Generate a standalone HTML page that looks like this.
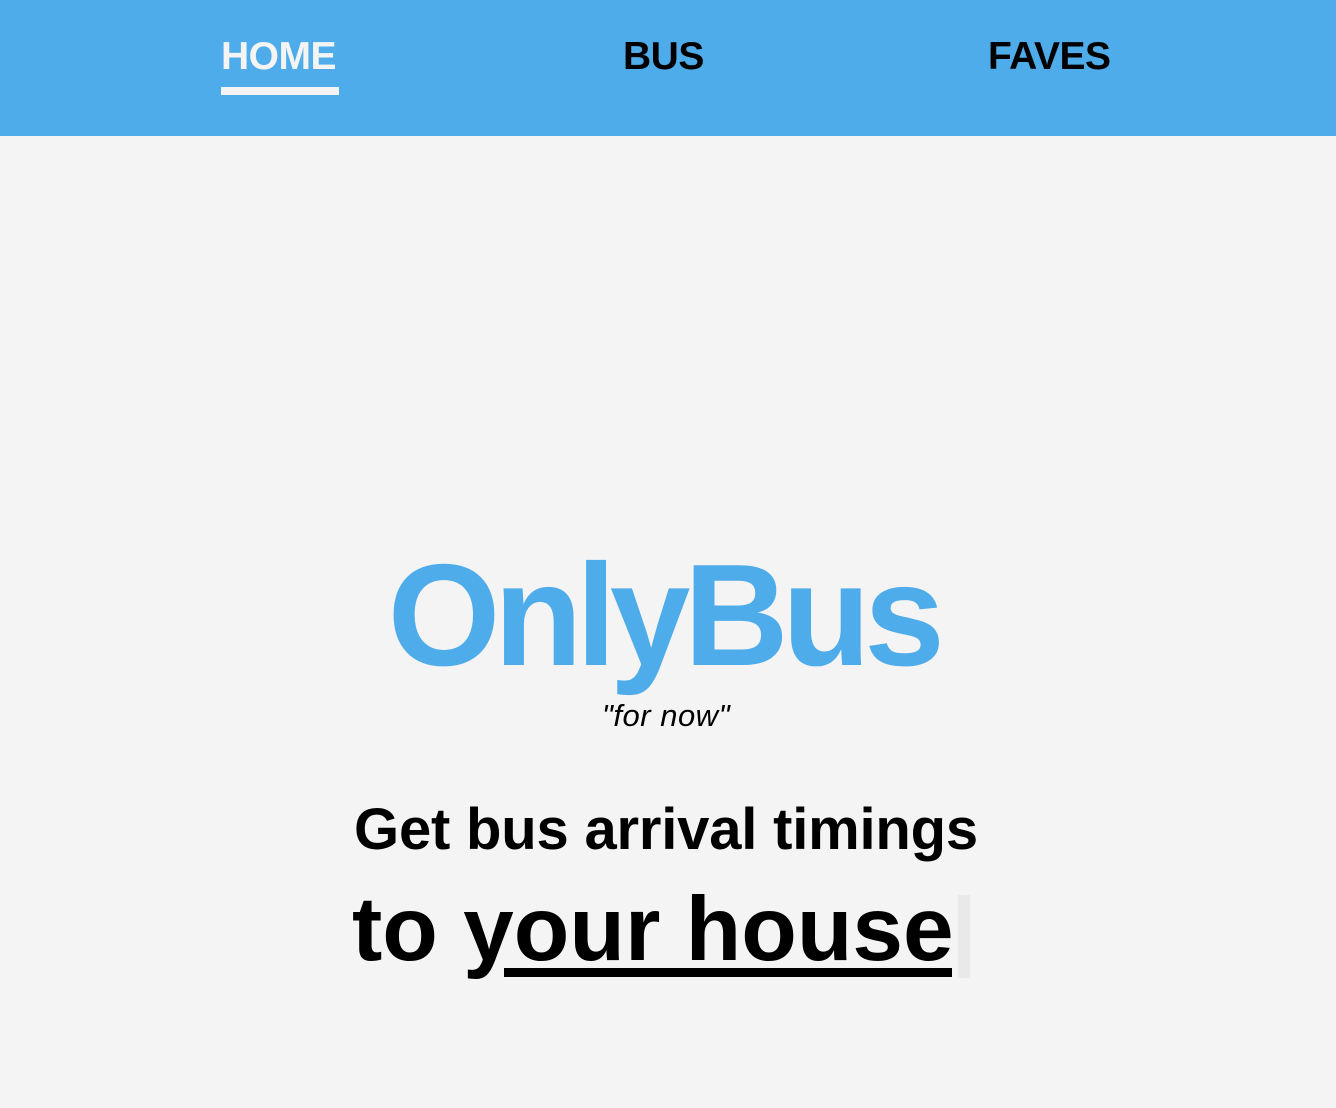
<!DOCTYPE html>
<html><head><style>
html,body{margin:0;padding:0;width:1336px;height:1108px;background:#f4f4f4;overflow:hidden;font-family:"Liberation Sans",sans-serif}
.hdr{position:absolute;left:0;top:0;width:1336px;height:136px;background:#4facea}
.nav{position:absolute;top:35px;font-weight:bold;font-size:39px;line-height:44px;letter-spacing:-0.5px}
.ul{position:absolute;left:221px;top:87px;width:118px;height:8px;background:#f4f4f4}
.c{position:absolute;left:0;width:1336px;text-align:center;white-space:nowrap}
</style></head><body>
<div class="hdr">
<div class="nav" style="left:221px;color:#f4f4f4">HOME</div>
<div class="ul"></div>
<div class="nav" style="left:623px;color:#000">BUS</div>
<div class="nav" style="left:988px;color:#000">FAVES</div>
</div>
<div class="c" style="top:530px;font-size:145px;line-height:170px;font-weight:bold;color:#4facea;letter-spacing:-6.5px;left:-5px">OnlyBus</div>
<div class="c" style="top:698px;font-size:31px;line-height:36px;font-style:italic;color:#000;letter-spacing:0.5px;left:-2px">"for now"</div>
<div class="c" style="top:797px;font-size:58px;line-height:66px;font-weight:bold;color:#000;letter-spacing:-0.2px;left:-2px">Get bus arrival timings</div>
<div style="position:absolute;left:352px;top:880px;font-size:91px;line-height:100px;font-weight:bold;color:#000;letter-spacing:0px;white-space:nowrap">to your house</div>
<div style="position:absolute;left:504px;top:968px;width:448px;height:9px;background:#000"></div>
<div style="position:absolute;left:958px;top:895px;width:12px;height:83px;background:#e9e9e9"></div>
</body></html>
